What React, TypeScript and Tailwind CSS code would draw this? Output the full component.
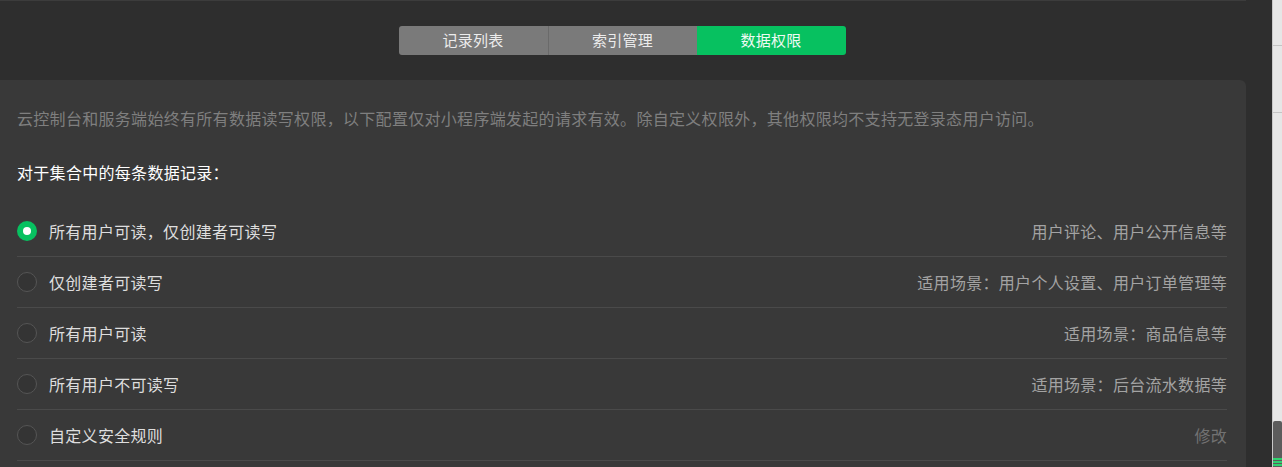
import React from 'react';

const tabs = ['记录列表', '索引管理', '数据权限'];

const options = [
  { label: '所有用户可读，仅创建者可读写', hint: '用户评论、用户公开信息等' },
  { label: '仅创建者可读写', hint: '适用场景：用户个人设置、用户订单管理等' },
  { label: '所有用户可读', hint: '适用场景：商品信息等' },
  { label: '所有用户不可读写', hint: '适用场景：后台流水数据等' },
  { label: '自定义安全规则', hint: '修改', link: true },
];

const font = { fontFamily: '"Noto Sans CJK SC", "Noto Sans", sans-serif' };

const Radio = ({ checked }: { checked: boolean }) =>
  checked ? (
    <div className="w-5 h-5 rounded-full bg-[#07c160] flex items-center justify-center shrink-0">
      <div className="w-[8px] h-[8px] rounded-full bg-white" />
    </div>
  ) : (
    <div className="w-5 h-5 rounded-full border border-[#555555] bg-[#343434] shrink-0" />
  );

const App = () => {
  const active = 2;
  const selected = 0;

  return (
    <div
      className="w-full h-[467px] bg-[#2e2e2e] flex overflow-hidden tracking-[0.3px]"
      style={font}
    >
      <div className="flex-1 flex flex-col pr-[26px]">
        <div className="h-[80px] shrink-0 border-t border-[#3c3c3c] flex justify-center pt-[25px]">
          <div className="flex h-[29px] rounded-[3px] overflow-hidden mr-[2px]">
            {tabs.map((t, i) => (
              <div
                key={t}
                className={
                  'w-[149px] flex items-center justify-center text-[15px] ' +
                  (i === active
                    ? 'bg-[#07c160] text-[#eefaf3]'
                    : 'bg-[#7a7a7a] text-[#ececec]') +
                  (i === 1 ? ' border-l border-[#6a6a6a]' : '')
                }
              >
                {t}
              </div>
            ))}
          </div>
        </div>

        <div className="flex-1 bg-[#393939] rounded-tr-[6px] pl-[17px] pr-[19px] pt-[26px]">
          <p className="text-[16px] leading-[24px] text-[#7f7f7f] whitespace-nowrap">
            云控制台和服务端始终有所有数据读写权限，以下配置仅对小程序端发起的请求有效。除自定义权限外，其他权限均不支持无登录态用户访问。
          </p>
          <p className="mt-[30px] text-[16px] leading-[24px] text-white">
            对于集合中的每条数据记录：
          </p>
          <div className="mt-[22px]">
            {options.map((o, i) => (
              <div
                key={o.label}
                className="h-[51px] flex items-center border-b border-[#4a4a4a]"
              >
                <Radio checked={i === selected} />
                <span className="ml-3 text-[16px] text-[#dedede]">{o.label}</span>
                <span
                  className={
                    'ml-auto text-[16px] ' +
                    (o.link ? 'text-[#727272]' : 'text-[#a3a3a3]')
                  }
                >
                  {o.hint}
                </span>
              </div>
            ))}
          </div>
        </div>
      </div>

      <div className="w-[10px] shrink-0 bg-[#e6e6e6] border-l border-[#c8c8c8] flex flex-col">
        <div className="h-[46px] border-b border-[#c4c4c4]" />
        <div className="h-[67px] border-b border-[#c4c4c4]" />
        <div className="flex-1" />
        <div className="h-[46px] bg-[#5c5c5c] rounded-t-[2px] flex flex-col justify-end pb-[1px] gap-[1px]">
          <div className="h-[2px] bg-[#2fd36f]" />
          <div className="h-[2px] bg-[#2fd36f]" />
          <div className="h-[2px] bg-[#2fd36f]" />
        </div>
      </div>
    </div>
  );
};

export default App;
